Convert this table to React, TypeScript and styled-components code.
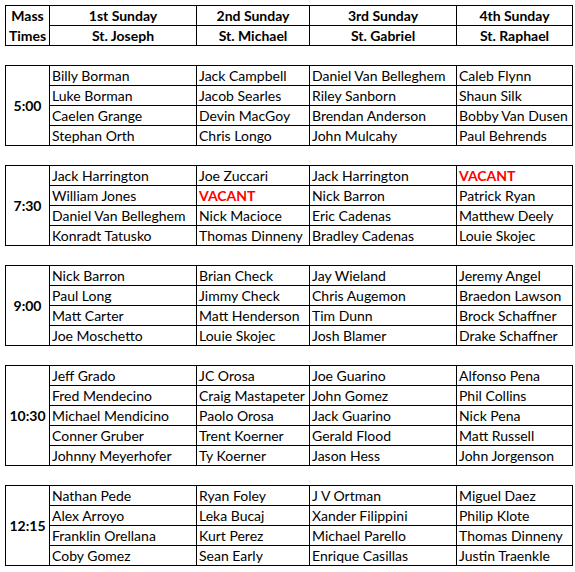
import React from "react";
import styled, { createGlobalStyle } from "styled-components";

const GlobalStyle = createGlobalStyle`
    body {
        margin: 0;
        background: #ffffff;
        font-family: Lato, "Liberation Sans", sans-serif;
        color: #000000;
    }
`;

type Block = { time: string; rows: string[][] };

const blocks: Block[] = [
    {
        time: "5:00",
        rows: [
            ["Billy Borman", "Jack Campbell", "Daniel Van Belleghem", "Caleb Flynn"],
            ["Luke Borman", "Jacob Searles", "Riley Sanborn", "Shaun Silk"],
            ["Caelen Grange", "Devin MacGoy", "Brendan Anderson", "Bobby Van Dusen"],
            ["Stephan Orth", "Chris Longo", "John Mulcahy", "Paul Behrends"],
        ],
    },
    {
        time: "7:30",
        rows: [
            ["Jack Harrington", "Joe Zuccari", "Jack Harrington", "VACANT"],
            ["William Jones", "VACANT", "Nick Barron", "Patrick Ryan"],
            ["Daniel Van Belleghem", "Nick Macioce", "Eric Cadenas", "Matthew Deely"],
            ["Konradt Tatusko", "Thomas Dinneny", "Bradley Cadenas", "Louie Skojec"],
        ],
    },
    {
        time: "9:00",
        rows: [
            ["Nick Barron", "Brian Check", "Jay Wieland", "Jeremy Angel"],
            ["Paul Long", "Jimmy Check", "Chris Augemon", "Braedon Lawson"],
            ["Matt Carter", "Matt Henderson", "Tim Dunn", "Brock Schaffner"],
            ["Joe Moschetto", "Louie Skojec", "Josh Blamer", "Drake Schaffner"],
        ],
    },
    {
        time: "10:30",
        rows: [
            ["Jeff Grado", "JC Orosa", "Joe Guarino", "Alfonso Pena"],
            ["Fred Mendecino", "Craig Mastapeter", "John Gomez", "Phil Collins"],
            ["Michael Mendicino", "Paolo Orosa", "Jack Guarino", "Nick Pena"],
            ["Conner Gruber", "Trent Koerner", "Gerald Flood", "Matt Russell"],
            ["Johnny Meyerhofer", "Ty Koerner", "Jason Hess", "John Jorgenson"],
        ],
    },
    {
        time: "12:15",
        rows: [
            ["Nathan Pede", "Ryan Foley", "J V Ortman", "Miguel Daez"],
            ["Alex Arroyo", "Leka Bucaj", "Xander Filippini", "Philip Klote"],
            ["Franklin Orellana", "Kurt Perez", "Michael Parello", "Thomas Dinneny"],
            ["Coby Gomez", "Sean Early", "Enrique Casillas", "Justin Traenkle"],
        ],
    },
];

const sundays = [
    ["1st Sunday", "St. Joseph"],
    ["2nd Sunday", "St. Michael"],
    ["3rd Sunday", "St. Gabriel"],
    ["4th Sunday", "St. Raphael"],
];

const App = () => {
    return (
        <Page>
            <GlobalStyle />
            <Sheet>
                <Grid>
                    <TimeCell $span={2}>
                        <span>Mass</span>
                        <span>Times</span>
                    </TimeCell>
                    {sundays.map(([day]) => (
                        <HeadCell key={day}>{day}</HeadCell>
                    ))}
                    {sundays.map(([, saint]) => (
                        <HeadCell key={saint}>{saint}</HeadCell>
                    ))}
                </Grid>

                {blocks.map((block) => (
                    <Grid key={block.time}>
                        <TimeCell $span={block.rows.length}>{block.time}</TimeCell>
                        {block.rows.map((row, i) =>
                            row.map((name, j) => (
                                <NameCell key={i + "-" + j} $vacant={name === "VACANT"}>
                                    {name}
                                </NameCell>
                            )),
                        )}
                    </Grid>
                ))}
            </Sheet>
        </Page>
    );
};

export default App;

const Page = styled.div`
    padding: 5px 0 0 5px;
`;

const Sheet = styled.div`
    display: flex;
    flex-direction: column;
    gap: 19px;
    width: 568px;
`;

const Grid = styled.div`
    display: grid;
    grid-template-columns: 43px 146px 112px 146px 115px;
    grid-auto-rows: 19px;
    gap: 1px;
    padding: 1px;
    background: #000000;
`;

const Cell = styled.div`
    background: #ffffff;
    font-size: 14px;
    line-height: 20px;
    white-space: nowrap;
    overflow: hidden;
`;

const HeadCell = styled(Cell)`
    font-weight: bold;
    text-align: center;
`;

const TimeCell = styled(Cell)<{ $span: number }>`
    grid-row: span ${({ $span }) => $span};
    grid-column: 1;
    display: flex;
    flex-direction: column;
    justify-content: center;
    align-items: center;
    font-weight: bold;
    line-height: 20px;
`;

const NameCell = styled(Cell)<{ $vacant: boolean }>`
    padding-left: 2px;
    color: ${({ $vacant }) => ($vacant ? "#ff0000" : "#000000")};
    font-weight: ${({ $vacant }) => ($vacant ? "bold" : "normal")};
`;
